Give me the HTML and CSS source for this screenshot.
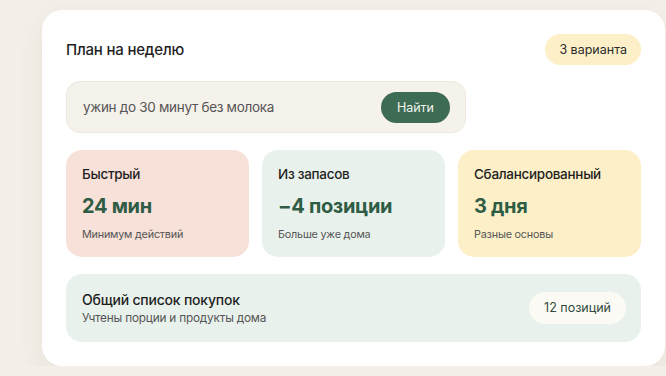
FILE: index.html
```html
<!DOCTYPE html>
<html lang="ru">
<head>
    <meta charset="UTF-8">
    <title>План на неделю</title>
    <link rel="stylesheet" href="styles.css">
</head>
<body>
<div class="panel">
    <div class="panel-head">
        <div class="panel-title">План на неделю</div>
        <div class="badge">3 варианта</div>
    </div>
    <div class="search">
        <div class="search-text">ужин до 30 минут без молока</div>
        <button class="search-btn">Найти</button>
    </div>
    <div class="options">
        <div class="option fast">
            <div class="option-name">Быстрый</div>
            <div class="option-value">24 мин</div>
            <div class="option-note">Минимум действий</div>
        </div>
        <div class="option stock">
            <div class="option-name">Из запасов</div>
            <div class="option-value">−4 позиции</div>
            <div class="option-note">Больше уже дома</div>
        </div>
        <div class="option balanced">
            <div class="option-name">Сбалансированный</div>
            <div class="option-value">3 дня</div>
            <div class="option-note">Разные основы</div>
        </div>
    </div>
    <div class="shopping">
        <div class="shopping-info">
            <div class="shopping-title">Общий список покупок</div>
            <div class="shopping-note">Учтены порции и продукты дома</div>
        </div>
        <div class="pill">12 позиций</div>
    </div>
</div>
</body>
</html>
```

FILE: styles.css
```css
html {
    height: 100%;
}
body {
    margin: 0;
    padding: 10px 0 0 42px;
    background: #f4f0e9;
    font-family: Inter, "Noto Sans", sans-serif;
    color: #1f1f1f;
    overflow: hidden;
}
.panel {
    width: 623px;
    height: 356px;
    box-sizing: border-box;
    padding: 24px;
    background: #fff;
    border-radius: 20px;
    box-shadow: 0 10px 30px rgba(70, 50, 20, 0.08);
}
.panel-head {
    display: flex;
    align-items: center;
    justify-content: space-between;
    height: 31px;
}
.panel-title {
    font-size: 15px;
    font-weight: 500;
    letter-spacing: -0.2px;
}
.badge {
    height: 31px;
    line-height: 31px;
    padding: 0 14px;
    border-radius: 16px;
    background: #fdf0c8;
    font-size: 12.5px;
    color: #2a2a2a;
}
.search {
    display: flex;
    align-items: center;
    justify-content: space-between;
    width: 400px;
    height: 52px;
    box-sizing: border-box;
    margin-top: 16px;
    padding: 0 15px 0 16px;
    background: #f5f1eb;
    border: 1px solid #ede7dd;
    border-radius: 14px;
}
.search-text {
    font-size: 13.5px;
    color: #555;
    letter-spacing: -0.3px;
}
.search-btn {
    height: 31px;
    padding: 0 16px;
    border: none;
    border-radius: 16px;
    background: #3e6b53;
    color: #f2f4ef;
    font-family: inherit;
    font-size: 12.5px;
}
.options {
    display: grid;
    grid-template-columns: repeat(3, 1fr);
    gap: 13px;
    margin-top: 17px;
}
.option {
    height: 107px;
    box-sizing: border-box;
    padding: 16px 16px 0;
    border-radius: 16px;
}
.option.fast {
    background: #f8e1d8;
}
.option.stock {
    background: #e9f1ec;
}
.option.balanced {
    background: #fdf0c8;
}
.option-name {
    font-size: 13.5px;
    font-weight: 500;
    line-height: 17px;
    letter-spacing: -0.3px;
}
.option-value {
    margin-top: 11px;
    font-size: 20px;
    font-weight: 700;
    line-height: 24px;
    color: #2f5c45;
    letter-spacing: -0.3px;
}
.option-note {
    margin-top: 10px;
    font-size: 10.8px;
    line-height: 14px;
    color: #555;
    letter-spacing: -0.2px;
}
.shopping {
    display: flex;
    align-items: center;
    justify-content: space-between;
    height: 68px;
    box-sizing: border-box;
    margin-top: 17px;
    padding: 0 15px 0 16px;
    background: #e9f1ec;
    border-radius: 16px;
}
.shopping-title {
    font-size: 14px;
    font-weight: 500;
    letter-spacing: -0.2px;
}
.shopping-note {
    margin-top: 3px;
    font-size: 11.8px;
    color: #555;
    letter-spacing: -0.2px;
}
.pill {
    height: 32px;
    line-height: 32px;
    padding: 0 15px;
    border-radius: 16px;
    background: #fcfaf5;
    font-size: 12.5px;
    color: #2f4a3c;
}
```
